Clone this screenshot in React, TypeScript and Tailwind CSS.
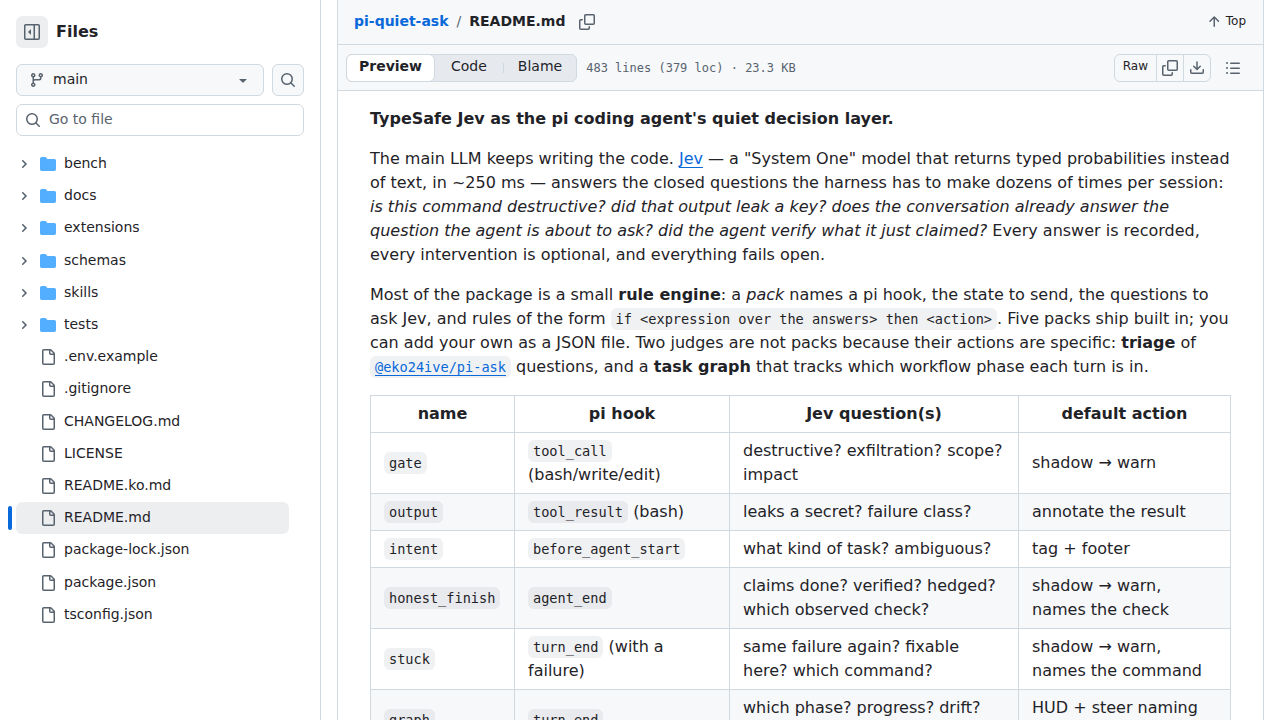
import type { ReactNode } from "react"

/******************************************************************************
                              Icons
******************************************************************************/

const ICONS = {
  sidebar: [
    "m4.177 7.823 2.396-2.396A.25.25 0 0 1 7 5.604v4.792a.25.25 0 0 1-.427.177L4.177 8.177a.25.25 0 0 1 0-.354Z",
    "M0 1.75C0 .784.784 0 1.75 0h12.5C15.216 0 16 .784 16 1.75v12.5A1.75 1.75 0 0 1 14.25 16H1.75A1.75 1.75 0 0 1 0 14.25Zm1.75-.25a.25.25 0 0 0-.25.25v12.5c0 .138.112.25.25.25H9.5v-13Zm12.5 13a.25.25 0 0 0 .25-.25V1.75a.25.25 0 0 0-.25-.25H11v13Z",
  ],
  branch: [
    "M9.5 3.25a2.25 2.25 0 1 1 3 2.122V6A2.5 2.5 0 0 1 10 8.5H6a1 1 0 0 0-1 1v1.128a2.251 2.251 0 1 1-1.5 0V5.372a2.25 2.25 0 1 1 1.5 0v1.836A2.493 2.493 0 0 1 6 7h4a1 1 0 0 0 1-1v-.628A2.25 2.25 0 0 1 9.5 3.25Zm-6 0a.75.75 0 1 0 1.5 0 .75.75 0 0 0-1.5 0Zm8.25-.75a.75.75 0 1 0 0 1.5.75.75 0 0 0 0-1.5ZM4.25 12a.75.75 0 1 0 0 1.5.75.75 0 0 0 0-1.5Z",
  ],
  search: [
    "M10.68 11.74a6 6 0 0 1-7.922-8.982 6 6 0 0 1 8.982 7.922l3.04 3.04a.749.749 0 0 1-.326 1.275.749.749 0 0 1-.734-.215ZM11.5 7a4.499 4.499 0 1 0-8.997 0A4.499 4.499 0 0 0 11.5 7Z",
  ],
  folder: [
    "M1.75 1A1.75 1.75 0 0 0 0 2.75v10.5C0 14.216.784 15 1.75 15h12.5A1.75 1.75 0 0 0 16 13.25v-8.5A1.75 1.75 0 0 0 14.25 3H7.5a.25.25 0 0 1-.2-.1l-.9-1.2C6.07 1.26 5.55 1 5 1H1.75Z",
  ],
  file: [
    "M2 1.75C2 .784 2.784 0 3.75 0h6.586c.464 0 .909.184 1.237.513l2.914 2.914c.329.328.513.773.513 1.237v9.586A1.75 1.75 0 0 1 13.25 16h-9.5A1.75 1.75 0 0 1 2 14.25Zm1.75-.25a.25.25 0 0 0-.25.25v12.5c0 .138.112.25.25.25h9.5a.25.25 0 0 0 .25-.25V6h-2.75A1.75 1.75 0 0 1 9 4.25V1.5Zm6.75.062V4.25c0 .138.112.25.25.25h2.688l-.011-.013-2.914-2.914-.013-.011Z",
  ],
  copy: [
    "M0 6.75C0 5.784.784 5 1.75 5h1.5a.75.75 0 0 1 0 1.5h-1.5a.25.25 0 0 0-.25.25v7.5c0 .138.112.25.25.25h7.5a.25.25 0 0 0 .25-.25v-1.5a.75.75 0 0 1 1.5 0v1.5A1.75 1.75 0 0 1 9.25 16h-7.5A1.75 1.75 0 0 1 0 14.25Z",
    "M5 1.75C5 .784 5.784 0 6.75 0h7.5C15.216 0 16 .784 16 1.75v7.5A1.75 1.75 0 0 1 14.25 11h-7.5A1.75 1.75 0 0 1 5 9.25Zm1.75-.25a.25.25 0 0 0-.25.25v7.5c0 .138.112.25.25.25h7.5a.25.25 0 0 0 .25-.25v-7.5a.25.25 0 0 0-.25-.25Z",
  ],
  download: [
    "M2.75 14A1.75 1.75 0 0 1 1 12.25v-2.5a.75.75 0 0 1 1.5 0v2.5c0 .138.112.25.25.25h10.5a.25.25 0 0 0 .25-.25v-2.5a.75.75 0 0 1 1.5 0v2.5A1.75 1.75 0 0 1 13.25 14Z",
    "M7.25 7.689V2a.75.75 0 0 1 1.5 0v5.689l1.97-1.969a.749.749 0 1 1 1.06 1.06l-3.25 3.25a.749.749 0 0 1-1.06 0L4.22 6.78a.749.749 0 1 1 1.06-1.06l1.97 1.969Z",
  ],
  list: [
    "M5.75 2.5h8.5a.75.75 0 0 1 0 1.5h-8.5a.75.75 0 0 1 0-1.5Zm0 5h8.5a.75.75 0 0 1 0 1.5h-8.5a.75.75 0 0 1 0-1.5Zm0 5h8.5a.75.75 0 0 1 0 1.5h-8.5a.75.75 0 0 1 0-1.5ZM2 14a1 1 0 1 1 0-2 1 1 0 0 1 0 2Zm1-6a1 1 0 1 1-2 0 1 1 0 0 1 2 0ZM2 4a1 1 0 1 1 0-2 1 1 0 0 1 0 2Z",
  ],
  arrowUp: [
    "M3.47 7.78a.75.75 0 0 1 0-1.06l4.25-4.25a.75.75 0 0 1 1.06 0l4.25 4.25a.751.751 0 0 1-.018 1.042.751.751 0 0 1-1.042.018L9 4.81v7.44a.75.75 0 0 1-1.5 0V4.81L4.53 7.78a.75.75 0 0 1-1.06 0Z",
  ],
  triangleDown: [
    "m4.427 7.427 3.396 3.396a.25.25 0 0 0 .354 0l3.396-3.396A.25.25 0 0 0 11.396 7H4.604a.25.25 0 0 0-.177.427Z",
  ],
}

function Icon({
  name,
  className = "text-[#59636e]",
}: {
  name: keyof typeof ICONS
  className?: string
}) {
  return (
    <svg
      viewBox="0 0 16 16"
      fill="currentColor"
      aria-hidden="true"
      className={`h-4 w-4 shrink-0 ${className}`}
    >
      {ICONS[name].map((d) => (
        <path key={d} d={d} />
      ))}
    </svg>
  )
}

function Chevron() {
  return (
    <svg
      viewBox="0 0 12 12"
      fill="currentColor"
      aria-hidden="true"
      className="h-3 w-3 text-[#59636e]"
    >
      <path d="M4.7 10c-.2 0-.4-.1-.5-.2-.3-.3-.3-.8 0-1.1L6.9 6 4.2 3.3c-.3-.3-.3-.8 0-1.1.3-.3.8-.3 1.1 0l3.3 3.2c.3.3.3.8 0 1.1L5.3 9.7c-.2.2-.4.3-.6.3Z" />
    </svg>
  )
}

/******************************************************************************
                              Data
******************************************************************************/

const FOLDERS = ["bench", "docs", "extensions", "schemas", "skills", "tests"]

const FILES = [
  ".env.example",
  ".gitignore",
  "CHANGELOG.md",
  "LICENSE",
  "README.ko.md",
  "README.md",
  "package-lock.json",
  "package.json",
  "tsconfig.json",
]

const PACKS = [
  {
    name: "gate",
    hook: "tool_call",
    note: "(bash/write/edit)",
    question: "destructive? exfiltration? scope? impact",
    action: "shadow → warn",
  },
  {
    name: "output",
    hook: "tool_result",
    note: "(bash)",
    question: "leaks a secret? failure class?",
    action: "annotate the result",
  },
  {
    name: "intent",
    hook: "before_agent_start",
    note: "",
    question: "what kind of task? ambiguous?",
    action: "tag + footer",
  },
  {
    name: "honest_finish",
    hook: "agent_end",
    note: "",
    question: "claims done? verified? hedged? which observed check?",
    action: "shadow → warn, names the check",
  },
  {
    name: "stuck",
    hook: "turn_end",
    note: "(with a failure)",
    question: "same failure again? fixable here? which command?",
    action: "shadow → warn, names the command",
  },
  {
    name: "graph",
    hook: "turn_end",
    note: "",
    question: "which phase? progress? drift? finished?",
    action: "HUD + steer naming the phase",
  },
]

/******************************************************************************
                              Components
******************************************************************************/

/** Inline code chip used in the document body. */
function Code({ children }: { children: ReactNode }) {
  return (
    <code className="rounded-md bg-[#818b98]/12 px-[5px] py-[3px] font-['DejaVu_Sans_Mono',monospace] text-[85%]">
      {children}
    </code>
  )
}

/** One row of the file tree. */
function TreeItem({ name, folder }: { name: string; folder?: boolean }) {
  const selected = name === "README.md"

  return (
    <li className="relative">
      {selected && (
        <span className="absolute top-1 -left-2 h-6 w-1 rounded-md bg-[#0969da]" />
      )}
      <a
        href={`#${name}`}
        className={`flex h-8 items-center gap-2 rounded-md text-sm ${selected ? "bg-[#818b98]/15" : ""}`}
      >
        <span className="flex w-4 justify-center">{folder && <Chevron />}</span>
        <Icon
          name={folder ? "folder" : "file"}
          className={folder ? "text-[#54aeff]" : "text-[#59636e]"}
        />
        <span className="pb-0.5">{name}</span>
      </a>
    </li>
  )
}

/** Left panel with the branch picker, file search and tree. */
function FileSidebar() {
  return (
    <aside className="w-[321px] shrink-0 border-r border-[#d1d9e0] p-4">
      <div className="flex items-center gap-2">
        <button
          type="button"
          aria-label="Collapse file tree"
          className="flex h-8 w-8 items-center justify-center rounded-md bg-[#818b98]/15"
        >
          <Icon name="sidebar" />
        </button>
        <h2 className="font-bold">Files</h2>
      </div>

      <div className="mt-4 flex gap-2">
        <div className="relative flex-1">
          <select
            aria-label="Branch"
            className="h-8 w-full appearance-none rounded-md border border-[#d1d9e0] bg-[#f6f8fa] pb-0.5 pl-9 text-sm"
          >
            <option>main</option>
          </select>
          <span className="pointer-events-none absolute inset-y-0 left-[13px] flex items-center">
            <Icon name="branch" />
          </span>
          <span className="pointer-events-none absolute inset-y-0 right-[13px] flex items-center">
            <Icon name="triangleDown" />
          </span>
        </div>
        <button
          type="button"
          aria-label="Search this repository"
          className="flex h-8 w-8 items-center justify-center rounded-md border border-[#d1d9e0] bg-[#f6f8fa]"
        >
          <Icon name="search" />
        </button>
      </div>

      <label className="mt-2 flex h-8 items-center gap-2 rounded-md border border-[#d1d9e0] px-2">
        <Icon name="search" />
        <input
          type="text"
          aria-label="Go to file"
          placeholder="Go to file"
          className="min-w-0 flex-1 pb-0.5 text-sm outline-none placeholder:text-[#59636e]"
        />
      </label>

      <ul className="mt-3 mr-[15px] flex min-h-[483px] flex-col justify-between">
        {FOLDERS.map((name) => (
          <TreeItem key={name} name={name} folder />
        ))}
        {FILES.map((name) => (
          <TreeItem key={name} name={name} />
        ))}
      </ul>
    </aside>
  )
}

/** Breadcrumb bar and the view/raw toolbar. */
function FileHeader() {
  return (
    <header className="bg-[#f6f8fa]">
      <div className="flex h-[45px] items-center border-b border-[#d1d9e0] px-4 text-sm">
        <nav className="flex gap-2 pb-0.5 font-bold">
          <a href="#root" className="text-[#0969da]">
            pi-quiet-ask
          </a>
          <span className="font-normal text-[#59636e]">/</span>
          <h1>README.md</h1>
        </nav>
        <button type="button" aria-label="Copy path" className="ml-3.5">
          <Icon name="copy" />
        </button>
        <a href="#top" className="ml-auto flex items-center gap-1 text-xs">
          <Icon name="arrowUp" />
          <span className="pr-px pb-0.5">Top</span>
        </a>
      </div>

      <div className="flex h-[46px] items-center border-b border-[#d1d9e0] px-2">
        <div className="flex h-7 items-stretch rounded-md border border-[#d1d9e0] bg-[#e6eaef] text-sm">
          <button
            type="button"
            className="-my-px -ml-px rounded-md border border-[#d1d9e0] bg-white px-3 pb-1 font-bold"
          >
            Preview
          </button>
          <button type="button" className="px-4 pb-1">
            Code
          </button>
          <span className="my-2 w-px bg-[#d1d9e0]" />
          <button type="button" className="px-3.5 pb-1">
            Blame
          </button>
        </div>
        <span className="ml-[9px] font-['DejaVu_Sans_Mono',monospace] text-xs text-[#59636e]">
          483 lines (379 loc) · 23.3 KB
        </span>

        <div className="ml-auto flex h-7 divide-x divide-[#d1d9e0] rounded-md border border-[#d1d9e0] text-xs">
          <button type="button" className="px-2 pb-1">
            Raw
          </button>
          <button
            type="button"
            aria-label="Copy raw file"
            className="flex items-center px-[5px]"
          >
            <Icon name="copy" />
          </button>
          <button
            type="button"
            aria-label="Download raw file"
            className="flex items-center px-[5px]"
          >
            <Icon name="download" />
          </button>
        </div>
        <button
          type="button"
          aria-label="Outline"
          className="mx-2 flex h-7 w-7 items-center justify-center"
        >
          <Icon name="list" />
        </button>
      </div>
    </header>
  )
}

/** Table of the packs that ship with the package. */
function PackTable() {
  return (
    <table className="w-full table-fixed border-collapse [&_td]:border [&_td]:border-[#d1d9e0] [&_td]:px-[13px] [&_td]:py-1.5 [&_th]:border [&_th]:border-[#d1d9e0] [&_th]:px-[13px] [&_th]:py-1.5">
      <thead>
        <tr>
          <th className="w-[144px]">name</th>
          <th className="w-[215px]">pi hook</th>
          <th className="w-[289px]">Jev question(s)</th>
          <th>default action</th>
        </tr>
      </thead>
      <tbody>
        {PACKS.map((pack) => (
          <tr key={pack.name} className="even:bg-[#f6f8fa]">
            <td>
              <Code>{pack.name}</Code>
            </td>
            <td>
              <Code>{pack.hook}</Code> {pack.note}
            </td>
            <td>{pack.question}</td>
            <td>{pack.action}</td>
          </tr>
        ))}
      </tbody>
    </table>
  )
}

function ReadmeBody() {
  return (
    <article className="flex flex-col gap-4 px-8 py-4">
      <p>
        <strong>TypeSafe Jev as the pi coding agent's quiet decision layer.</strong>
      </p>
      <p>
        The main LLM keeps writing the code.{" "}
        <a href="#jev" className="text-[#0969da] underline underline-offset-3">
          Jev
        </a>{" "}
        — a "System One" model that returns typed probabilities instead of text,
        in ~250 ms — answers the closed questions the harness has to make dozens
        of times per session:{" "}
        <em>
          is this command destructive? did that output leak a key? does the
          conversation already answer the question the agent is about to ask?
          did the agent verify what it just claimed?
        </em>{" "}
        Every answer is recorded, every intervention is optional, and everything
        fails open.
      </p>
      <p>
        Most of the package is a small <strong>rule engine</strong>: a{" "}
        <em>pack</em> names a pi hook, the state to send, the questions to ask
        Jev, and rules of the form{" "}
        <Code>{"if <expression over the answers> then <action>"}</Code>. Five
        packs ship built in; you can add your own as a JSON file. Two judges are
        not packs because their actions are specific: <strong>triage</strong> of{" "}
        <Code>
          <a
            href="#pi-ask"
            className="text-[#0969da] underline underline-offset-3"
          >
            @eko24ive/pi-ask
          </a>
        </Code>{" "}
        questions, and a <strong>task graph</strong> that tracks which workflow
        phase each turn is in.
      </p>
      <PackTable />
    </article>
  )
}

/******************************************************************************
                              Export
******************************************************************************/

export default function App() {
  return (
    <div className="flex h-screen overflow-hidden bg-white font-['DejaVu_Sans',sans-serif] text-base text-[#1f2328]">
      <FileSidebar />
      <main className="mx-4 min-w-0 flex-1">
        <div className="border-x border-[#d1d9e0]">
          <FileHeader />
          <ReadmeBody />
        </div>
      </main>
    </div>
  )
}
